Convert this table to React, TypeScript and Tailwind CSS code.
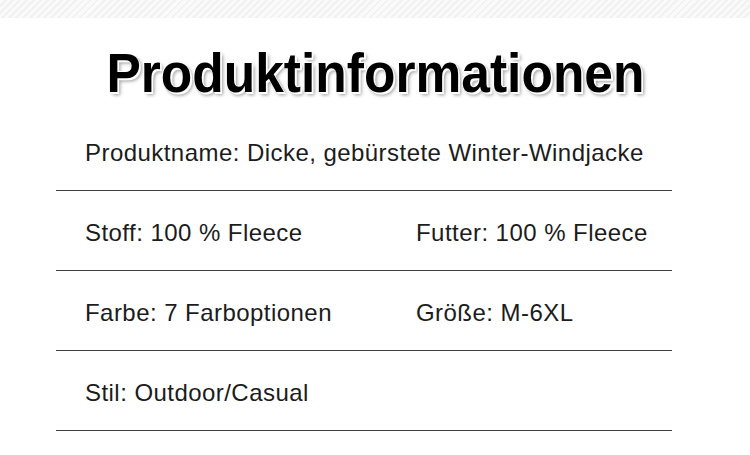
export default function App() {
  const rows: [string, string?][] = [
    ["Stoff: 100 % Fleece", "Futter: 100 % Fleece"],
    ["Farbe: 7 Farboptionen", "Größe: M-6XL"],
    ["Stil: Outdoor/Casual"],
  ];

  return (
    <div className="w-[750px] h-[455px] bg-white overflow-hidden font-['Liberation_Sans',Arial,sans-serif]">
      {/* striped top band */}
      <div className="h-[18px] bg-[repeating-linear-gradient(135deg,#fafafa_0px,#fafafa_3px,#f1f1f1_3px,#f1f1f1_5px)]" />

      <div className="h-[93px] flex items-center justify-center pt-[17px]">
        <h1 className="inline-block scale-x-[0.92] text-[56px] leading-none font-bold text-black [text-shadow:1px_1px_0_#fff,2px_2px_0_#fff,-1px_-1px_0_#fff,3px_3px_4px_rgba(0,0,0,0.4)]">
          Produktinformationen
        </h1>
      </div>

      <div className="ml-[56px] w-[616px] text-[24px] tracking-[0.45px] text-[#1c1c1c]">
        <div className="h-[80px] border-b border-[#3f3f3f] flex items-center pl-[29px] pt-[4px]">
          Produktname: Dicke, gebürstete Winter-Windjacke
        </div>
        {rows.map((r, i) => (
          <div
            key={i}
            className="h-[80px] border-b border-[#3f3f3f] grid grid-cols-[331px_1fr] items-center pl-[29px] pt-[5px]"
          >
            <span>{r[0]}</span>
            <span>{r[1] ?? ""}</span>
          </div>
        ))}
      </div>
    </div>
  );
}
